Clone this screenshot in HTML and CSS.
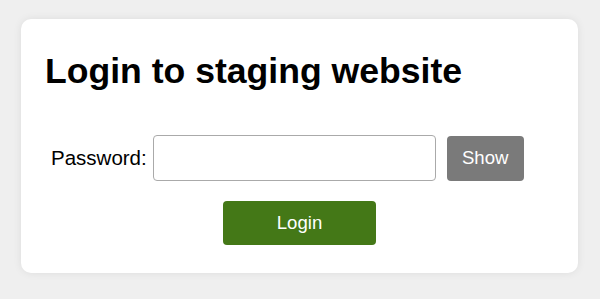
FILE: index.html
```html
<!DOCTYPE html>
<html>
<head>
<meta charset="utf-8">
<link rel="stylesheet" href="styles.css">
</head>
<body>
<div class="card">
  <h1 class="title">Login to staging website</h1>
  <form class="form">
    <div class="row">
      <label class="label" for="pw">Password:</label>
      <input class="input" id="pw" type="password">
      <button class="btn show" type="button">Show</button>
    </div>
    <div class="actions">
      <button class="btn login" type="button">Login</button>
    </div>
  </form>
</div>
</body>
</html>
```
FILE: styles.css
```css
html, body {
  margin: 0;
  background: #efefef;
  font-family: "Liberation Sans", Arial, sans-serif;
}
body {
  padding: 19px 21px;
}
.card {
  width: 557px;
  height: 254px;
  box-sizing: border-box;
  background: #fff;
  border-radius: 10px;
  box-shadow: 0 0 8px rgba(0,0,0,0.08);
  padding: 20px 24px;
}
.title {
  font-size: 35.6px;
  font-weight: bold;
  margin: 12px 0 0 0;
  line-height: 41px;
}
.form {
  margin-top: 43px;
}
.row {
  display: flex;
  align-items: center;
  padding-left: 6px;
}
.label {
  font-size: 20.5px;
  color: #000;
  margin-right: 6px;
}
.input {
  width: 283px;
  height: 46px;
  box-sizing: border-box;
  border: 1px solid #aaa;
  border-radius: 4px;
  margin: 0 11px 0 0;
  padding: 0 8px;
  font-size: 18px;
}
.btn {
  border: none;
  border-radius: 4px;
  color: #fff;
  font-family: "Liberation Sans", Arial, sans-serif;
  font-size: 18.6px;
  padding: 0;
}
.show {
  width: 77px;
  height: 45px;
  background: #7a7a7a;
}
.actions {
  display: flex;
  justify-content: center;
  margin-top: 20px;
}
.login {
  width: 153px;
  height: 44px;
  background: #447817;
}
```
